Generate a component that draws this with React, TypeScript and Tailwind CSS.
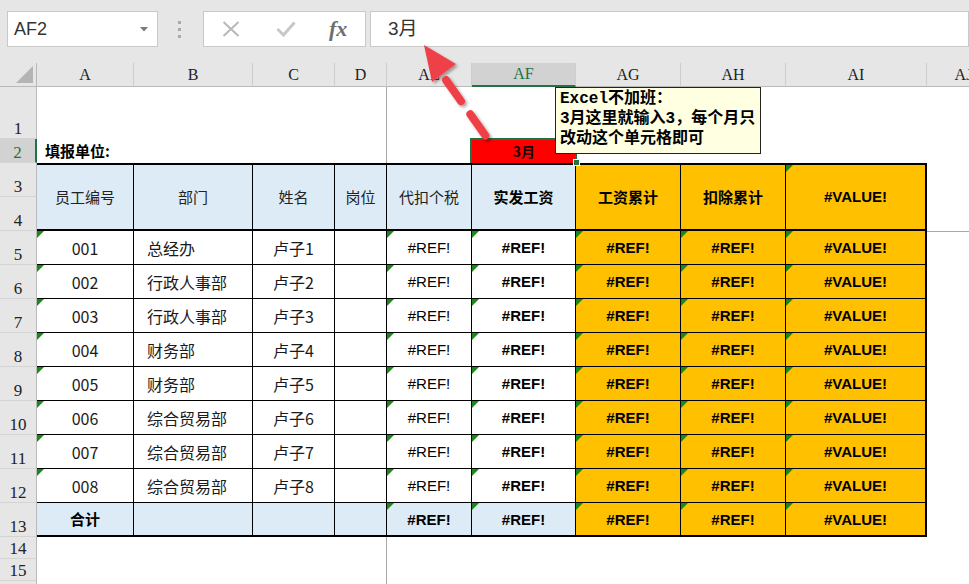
import React from "react";

const fCJK = "[font-family:'Noto_Sans_CJK_SC',sans-serif]";
const fSerif = "[font-family:'Liberation_Serif','Noto_Serif_CJK_SC',serif]";
const fSans = "[font-family:'Liberation_Sans','Noto_Sans_CJK_SC',sans-serif]";
const fMono = "[font-family:'Liberation_Mono','Noto_Sans_CJK_SC',monospace]";

const blue = "bg-[#ddebf7]";
const orange = "bg-[#ffc000]";
const cell = "relative flex items-center shrink-0 border-r border-black";

const people = [
  ["001", "总经办", "卢子1"],
  ["002", "行政人事部", "卢子2"],
  ["003", "行政人事部", "卢子3"],
  ["004", "财务部", "卢子4"],
  ["005", "财务部", "卢子5"],
  ["006", "综合贸易部", "卢子6"],
  ["007", "综合贸易部", "卢子7"],
  ["008", "综合贸易部", "卢子8"],
];

const columns = [
  { label: "A", w: "w-[97px]" },
  { label: "B", w: "w-[119px]" },
  { label: "C", w: "w-[82px]" },
  { label: "D", w: "w-[52px]" },
  { label: "AE", w: "w-[85px]" },
  { label: "AF", w: "w-[104px]", sel: true },
  { label: "AG", w: "w-[105px]" },
  { label: "AH", w: "w-[105px]" },
  { label: "AI", w: "w-[141px]" },
  { label: "AJ", w: "w-[74px]" },
];

const rowHeads = [
  { n: "1", h: "h-[52px]" },
  { n: "2", h: "h-[24px]", sel: true },
  ...["3", "4", "5", "6", "7", "8", "9", "10", "11", "12", "13"].map((n) => ({ n, h: "h-[34px]" })),
  { n: "14", h: "h-[22px]" },
  { n: "15", h: "h-[22px]" },
  { n: "", h: "h-[22px]" },
];

// little green "error" flag in the top-left corner of a cell
function Tri() {
  return (
    <span className="absolute left-0 top-0 h-[7px] w-[7px] bg-[#188a18] [clip-path:polygon(0_0,100%_0,0_100%)]" />
  );
}

function Toolbar() {
  return (
    <div className="flex h-[63px] items-start bg-[#e6e6e6] pt-[11px]">
      {/* Name box */}
      <div className="ml-[7px] flex h-[36px] w-[151px] items-center justify-between border border-[#c9c9c9] bg-white pl-[6px] pr-[9px]">
        <span className={`${fSans} text-[18px] text-[#333]`}>AF2</span>
        <svg width="8" height="5" viewBox="0 0 8 5">
          <polygon points="0,0 8,0 4,4.5" fill="#7a7a7a" />
        </svg>
      </div>
      {/* grip dots */}
      <div className="ml-[20px] mt-[10px] flex flex-col gap-[4px]">
        <span className="h-[3px] w-[3px] bg-[#a9a9a9]" />
        <span className="h-[3px] w-[3px] bg-[#a9a9a9]" />
        <span className="h-[3px] w-[3px] bg-[#a9a9a9]" />
      </div>
      {/* cancel / enter / fx */}
      <div className="ml-[22px] flex h-[36px] w-[163px] items-center border border-[#c9c9c9] bg-white">
        <svg className="ml-[18px]" width="18" height="16" viewBox="0 0 18 16">
          <path d="M1.5 1 L16.5 15 M16.5 1 L1.5 15" stroke="#b8b8b8" strokeWidth="2" />
        </svg>
        <svg className="ml-[36px]" width="20" height="16" viewBox="0 0 20 16">
          <path d="M1.5 8 L7.5 14 L18.5 1.5" stroke="#c8c8c8" strokeWidth="3" fill="none" />
        </svg>
        <span className={`${fSerif} ml-[33px] text-[22px] font-bold italic leading-none text-[#6e6e6e]`}>fx</span>
      </div>
      {/* formula input */}
      <div className="ml-[4px] flex h-[36px] flex-1 items-center border border-[#c9c9c9] bg-white pl-[17px]">
        <span className={`${fSans} text-[19px] text-[#333]`}>3月</span>
      </div>
    </div>
  );
}

function ColumnHeaders() {
  return (
    <div className="flex h-[24px] bg-[#e6e6e6]">
      <div className="relative h-[24px] w-[37px] shrink-0 border-r border-b border-[#b9b9b9]">
        <svg className="absolute left-[16px] top-[3px]" width="18" height="18" viewBox="0 0 18 18">
          <polygon points="17,0 17,17 0,17" fill="#b4b4b4" />
        </svg>
      </div>
      {columns.map((c) => (
        <div
          key={c.label}
          className={`${c.w} ${fSerif} flex h-[24px] shrink-0 items-center justify-center border-r border-[#cdcdcd] text-[16px] ${
            c.sel
              ? "border-b-2 border-b-[#217346] bg-[#d2d2d2] text-[#217346]"
              : "border-b border-b-[#b9b9b9] text-[#222]"
          }`}
        >
          {c.label}
        </div>
      ))}
    </div>
  );
}

function RowHeaders() {
  return (
    <div className="flex w-[37px] shrink-0 flex-col bg-[#e6e6e6]">
      {rowHeads.map((r, i) => (
        <div
          key={i}
          className={`${r.h} ${fSerif} flex shrink-0 items-end justify-center border-b border-b-[#d4d4d4] pb-[1px] text-[17px] leading-none ${
            r.sel
              ? "border-r-2 border-r-[#217346] bg-[#d2d2d2] text-[#217346]"
              : "border-r border-r-[#b9b9b9] text-[#222]"
          }`}
        >
          {r.n}
        </div>
      ))}
    </div>
  );
}

function Table() {
  const txt = `${fCJK} text-[16px] text-[#1a1a1a]`;
  const err = `${fSans} text-[15px] text-black`;
  return (
    <div className="w-[890px] shrink-0 border-t-2 border-r-2 border-b-2 border-black">
      {/* merged header rows 3-4 */}
      <div className={`flex h-[66px] border-b-2 border-black ${fCJK} text-[15px] text-[#222]`}>
        <div className={`${cell} ${blue} w-[97px] justify-center`}>员工编号</div>
        <div className={`${cell} ${blue} w-[119px] justify-center`}>部门</div>
        <div className={`${cell} ${blue} w-[82px] justify-center`}>姓名</div>
        <div className={`${cell} ${blue} w-[52px] justify-center`}>岗位</div>
        <div className={`${cell} ${blue} w-[85px] justify-center`}>代扣个税</div>
        <div className={`${cell} ${blue} w-[104px] justify-center font-bold text-black`}>实发工资</div>
        <div className={`${cell} ${orange} w-[105px] justify-center font-bold text-black`}>工资累计</div>
        <div className={`${cell} ${orange} w-[105px] justify-center font-bold text-black`}>扣除累计</div>
        <div className={`relative flex w-[139px] shrink-0 items-center justify-center ${orange} ${fSans} text-[15px] font-bold text-black`}>
          <Tri />
          #VALUE!
        </div>
      </div>

      {people.map((p) => (
        <div key={p[0]} className="flex h-[34px] border-b border-black">
          <div className={`${cell} w-[97px] justify-center ${txt}`}>
            <Tri />
            {p[0]}
          </div>
          <div className={`${cell} w-[119px] justify-start pl-[13px] ${txt}`}>{p[1]}</div>
          <div className={`${cell} w-[82px] justify-center ${txt}`}>{p[2]}</div>
          <div className={`${cell} w-[52px]`} />
          <div className={`${cell} w-[85px] justify-center pt-[2px] ${err}`}>
            <Tri />
            #REF!
          </div>
          <div className={`${cell} w-[104px] justify-center pt-[2px] font-bold ${err}`}>
            <Tri />
            #REF!
          </div>
          <div className={`${cell} ${orange} w-[105px] justify-center pt-[2px] font-bold ${err}`}>
            <Tri />
            #REF!
          </div>
          <div className={`${cell} ${orange} w-[105px] justify-center pt-[2px] font-bold ${err}`}>
            <Tri />
            #REF!
          </div>
          <div className={`relative flex w-[139px] shrink-0 items-center justify-center pt-[2px] ${orange} font-bold ${err}`}>
            <Tri />
            #VALUE!
          </div>
        </div>
      ))}

      {/* 合计 */}
      <div className="flex h-[32px]">
        <div className={`${cell} ${blue} w-[97px] justify-center ${fCJK} text-[15px] font-bold text-black`}>合计</div>
        <div className={`${cell} ${blue} w-[119px]`} />
        <div className={`${cell} ${blue} w-[82px]`} />
        <div className={`${cell} ${blue} w-[52px]`} />
        <div className={`${cell} ${blue} w-[85px] justify-center pt-[2px] font-bold ${err}`}>
          <Tri />
          #REF!
        </div>
        <div className={`${cell} ${blue} w-[104px] justify-center pt-[2px] font-bold ${err}`}>
          <Tri />
          #REF!
        </div>
        <div className={`${cell} ${orange} w-[105px] justify-center pt-[2px] font-bold ${err}`}>
          <Tri />
          #REF!
        </div>
        <div className={`${cell} ${orange} w-[105px] justify-center pt-[2px] font-bold ${err}`}>
          <Tri />
          #REF!
        </div>
        <div className={`relative flex w-[139px] shrink-0 items-center justify-center pt-[2px] ${orange} font-bold ${err}`}>
          <Tri />
          #VALUE!
        </div>
      </div>
    </div>
  );
}

function Sheet() {
  const frozen = "w-[350px] shrink-0 border-r border-[#a8a8a8]";
  return (
    <div className="flex w-[932px] shrink-0 flex-col">
      <div className="flex h-[52px]">
        <div className={frozen} />
      </div>
      <div className="flex h-[24px]">
        <div className={`${frozen} flex items-center pl-[8px] ${fCJK} text-[15px] font-bold text-black`}>填报单位:</div>
        <div className="w-[85px] shrink-0" />
        <div className={`relative z-10 flex w-[104px] shrink-0 items-center justify-center bg-[#ff0000] ${fCJK} text-[14px] font-bold text-[#220000]`}>
          3月
          <span className="absolute -left-[2px] -top-px h-[25px] w-[107px] border-2 border-b-0 border-[#217346]" />
          <span className="absolute -bottom-[3px] -right-[4px] h-[7px] w-[7px] border border-white bg-[#217346]" />
        </div>
      </div>
      <div className="flex">
        <Table />
        <div className="flex-1">
          <div className="h-[69px] border-b border-[#a8a8a8]" />
        </div>
      </div>
      <div className="flex h-[22px]">
        <div className={frozen} />
      </div>
      <div className="flex h-[22px]">
        <div className={frozen} />
      </div>
      <div className="flex h-[22px]">
        <div className={frozen} />
      </div>
    </div>
  );
}

function Comment() {
  return (
    <div className={`absolute left-[555px] top-[87px] z-20 h-[67px] w-[206px] border border-[#222] bg-[#ffffe1] pl-[4px] pt-px ${fMono} text-[16px] font-bold leading-[20px] text-black`}>
      <div>Excel不加班：</div>
      <div>3月这里就输入3，每个月只</div>
      <div>改动这个单元格即可</div>
    </div>
  );
}

function Arrow() {
  return (
    <svg className="pointer-events-none absolute left-0 top-0 z-30" width="969" height="584" viewBox="0 0 969 584">
      <defs>
        <filter id="sh" x="-20%" y="-20%" width="140%" height="140%">
          <feDropShadow dx="2" dy="2" stdDeviation="1.6" floodColor="#000" floodOpacity="0.35" />
        </filter>
      </defs>
      <g filter="url(#sh)">
        <line x1="446" y1="80" x2="490" y2="142" stroke="#ef4146" strokeWidth="8" strokeLinecap="round" strokeDasharray="26 16" />
        <polygon points="424,45 456,64 432,82" fill="#ef4146" />
      </g>
    </svg>
  );
}

export default function App() {
  return (
    <div className="relative h-[584px] w-[969px] overflow-hidden bg-white">
      <Toolbar />
      <ColumnHeaders />
      <div className="flex">
        <RowHeaders />
        <Sheet />
      </div>
      <Comment />
      <Arrow />
    </div>
  );
}
